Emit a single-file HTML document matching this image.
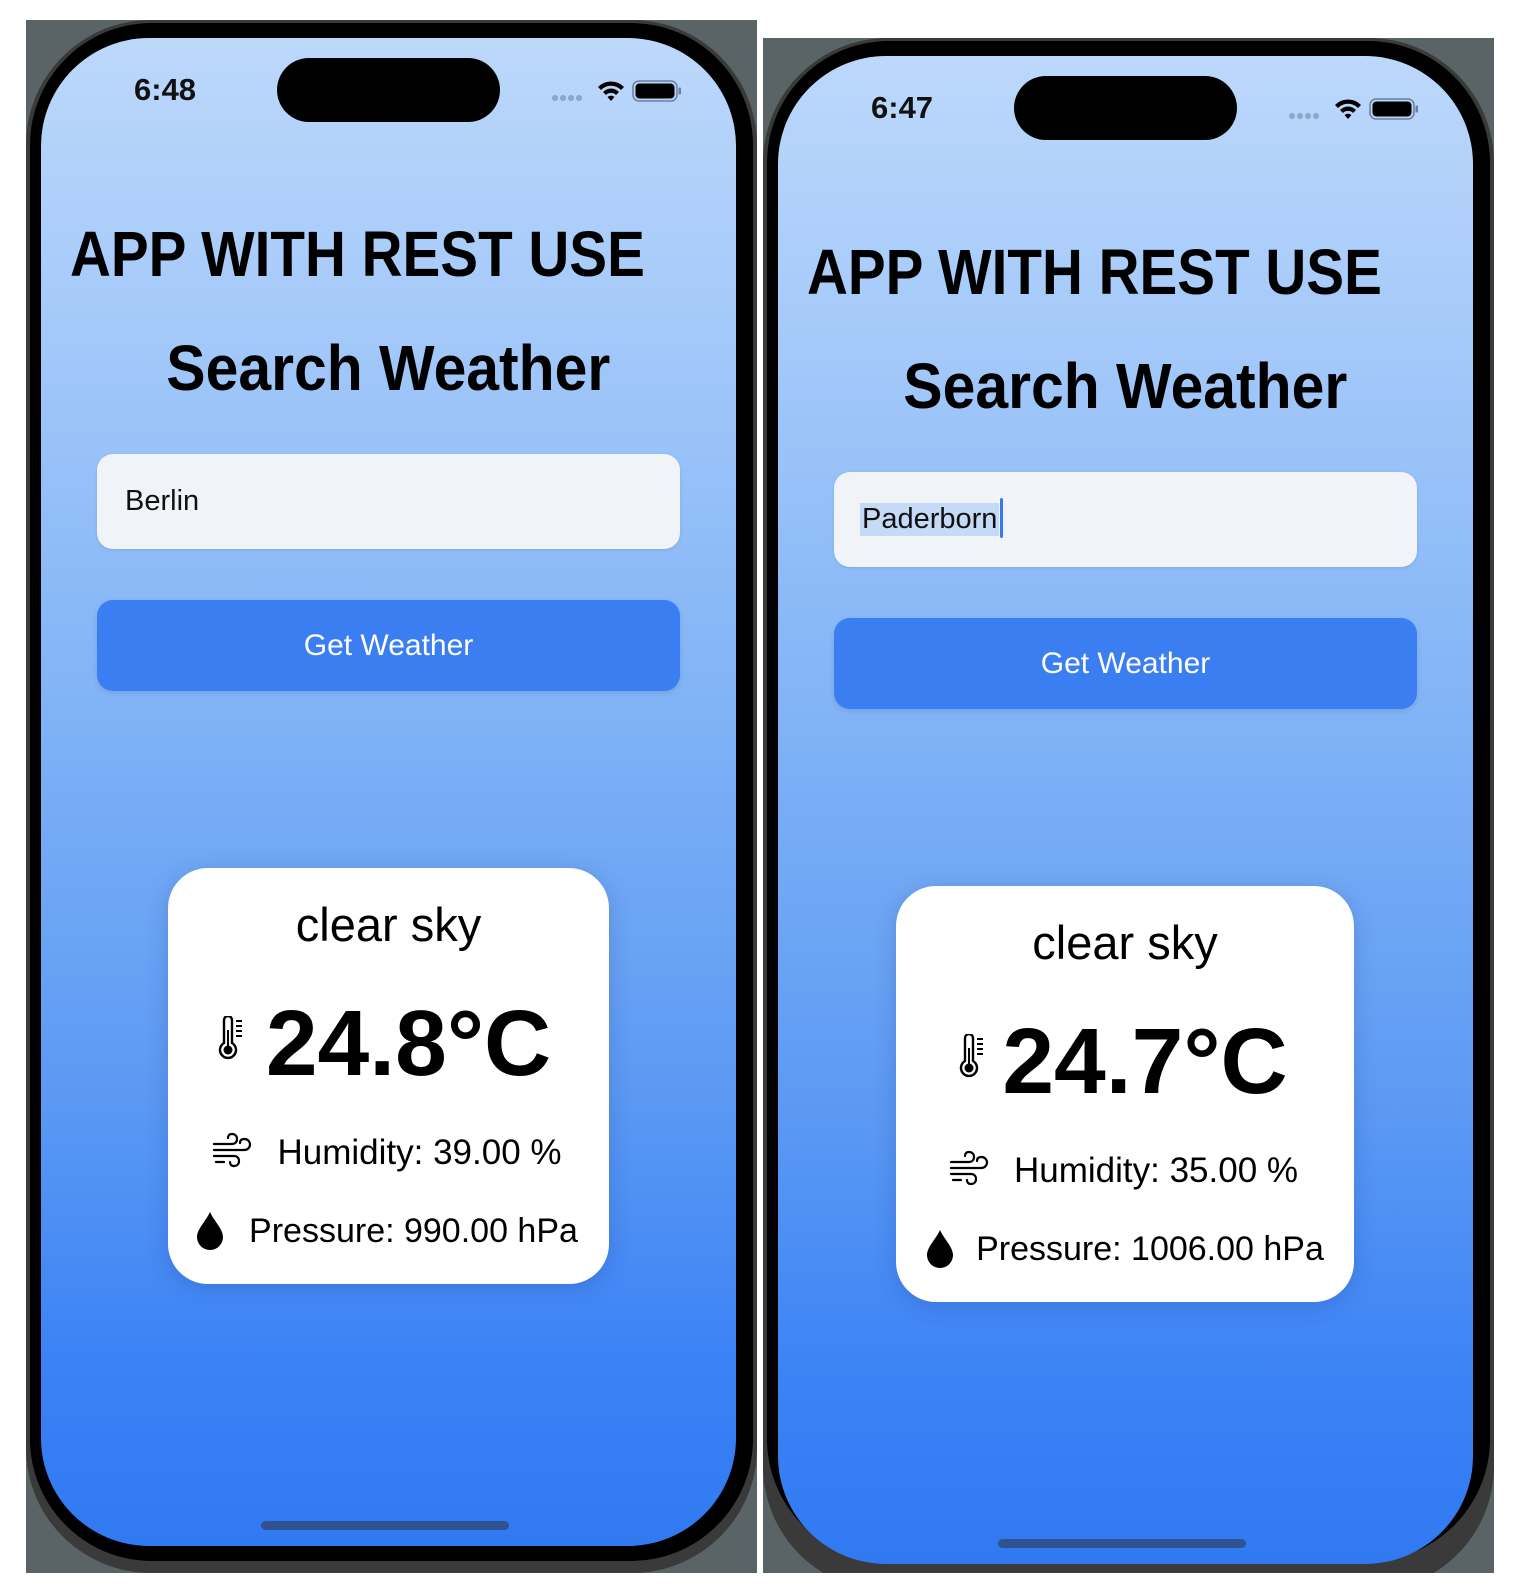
<!DOCTYPE html>
<html><head><meta charset="utf-8"><style>
*{margin:0;padding:0;box-sizing:border-box}
body{width:1522px;height:1594px;background:#fff;position:relative;overflow:hidden;font-family:"Liberation Sans",sans-serif}
.ph{position:absolute;width:731px;height:1553px;overflow:hidden;background:#5a6466}
.frame{position:absolute;left:0;top:0;width:731px;height:1553px;border-radius:125px;background:#3a3a3a}
.bez{position:absolute;left:4px;top:3px;right:4px;bottom:12px;border-radius:122px;background:#000}
.scr{position:absolute;left:15px;top:18px;width:695px;height:1508px;border-radius:108px;background:linear-gradient(#bcd8fb 0%,#a3c8f9 20%,#7fb2f6 45%,#5b99f3 70%,#3b82f6 88%,#3079f0 100%);overflow:hidden}
.a{position:absolute}
.time{left:93px;top:34px;font-size:31px;font-weight:bold;color:#111}
.isl{left:236px;top:20px;width:223px;height:64px;border-radius:32px;background:#000}
.title{left:0;width:695px;text-align:center;font-weight:bold;color:#000;white-space:nowrap}
.title span{display:inline-block}
.t1{left:29px;text-align:left;width:auto}
.t1 span{transform-origin:0 50%}
.inp{left:56px;top:416px;width:583px;height:95px;border-radius:16px;background:#f0f3f7;box-shadow:0 1px 3px rgba(0,0,0,.1)}
.inp span{position:absolute;left:28px;top:31px;font-size:29px;color:#111}
.btn{left:56px;top:562px;width:583px;height:91px;border-radius:16px;background:#3a7ef1;color:#fff;font-size:30px;text-align:center;line-height:91px;box-shadow:0 2px 6px rgba(0,0,0,.1)}
.card{top:830px;height:416px;border-radius:40px;background:#fff;box-shadow:0 4px 20px rgba(30,60,140,.25)}
.row{position:absolute;left:0;right:0;text-align:center;white-space:nowrap;color:#000}
.home{left:220px;top:1483px;width:248px;height:9px;border-radius:5px;background:#2f5390}
</style></head><body>

<!-- LEFT PHONE -->
<div class="ph" style="left:26px;top:20px">
<div class="frame"></div><div class="bez"></div>
<div class="scr">
  <div class="a time">6:48</div>
  <div class="a isl"></div>
  <svg class="a" style="left:510px;top:38px" width="140" height="30" viewBox="0 0 140 30">
    <g fill="#8aa6c8"><circle cx="4" cy="22" r="3"/><circle cx="12" cy="22" r="3"/><circle cx="20" cy="22" r="3"/><circle cx="28" cy="22" r="3"/></g>
    <path d="M47 11a18 18 0 0 1 26 0l-3 3a14 14 0 0 0-20 0z M52 16a11 11 0 0 1 16 0l-3 3a7 7 0 0 0-10 0z M56.5 21a5 5 0 0 1 7 0l-3.5 4z" fill="#000"/>
    <rect x="82" y="5" width="44" height="20" rx="6" fill="none" stroke="#6a7f9c" stroke-width="1.5"/>
    <rect x="84.5" y="7.5" width="39" height="15" rx="4" fill="#000"/>
    <rect x="127.5" y="11.5" width="2.5" height="7" rx="1" fill="#6a7f9c"/>
  </svg>
  <div class="a title t1" style="top:179px;font-size:64px"><span style="transform:scaleX(.885)">APP WITH REST USE</span></div>
  <div class="a title" style="top:293px;font-size:64px"><span style="transform:scaleX(.92)">Search Weather</span></div>
  <div class="a inp"><span>Berlin</span></div>
  <div class="a btn">Get Weather</div>
  <div class="a card" style="left:127px;width:441px">
    <div class="row" style="top:29px;font-size:47px">clear sky</div>
    <div class="row" style="top:122px;font-size:93px;font-weight:bold;padding-left:40px">24.8°C</div>
    <svg class="a" style="left:50px;top:148px" width="26" height="44" viewBox="0 0 26 44"><path d="M6 4a4 4 0 0 1 8 0v23a8 8 0 1 1-8 0z" fill="none" stroke="#000" stroke-width="2.4"/><circle cx="10" cy="34" r="4.5" fill="#000"/><rect x="9" y="14" width="2" height="18" fill="#000"/><g stroke="#000" stroke-width="2"><path d="M18 5h6M18 10h6M18 15h6M18 20h6"/></g></svg>
    <div class="row" style="top:265px;font-size:35px;padding-left:62px">Humidity: 39.00 %</div>
    <svg class="a" style="left:44px;top:264px" width="42" height="36" viewBox="0 0 42 36"><g fill="none" stroke="#000" stroke-width="2.2" stroke-linecap="round"><path d="M2 12h18c3 0 5-2 5-5s-2-5-5-5-4 2-4 4"/><path d="M2 18h30c4 0 6-3 6-5.5S36 7 32.5 7 28 9 28 11"/><path d="M2 24h20c3 0 5 2 5 5s-2 5-5 5-4-2-4-4"/><path d="M4 30h8"/></g></svg>
    <div class="row" style="top:344px;font-size:34px;padding-left:50px">Pressure: 990.00 hPa</div>
    <svg class="a" style="left:28px;top:343px" width="28" height="40" viewBox="0 0 28 40"><path d="M14 1C10 10 1 18 1 26a13 13 0 0 0 26 0C27 18 18 10 14 1z" fill="#000"/></svg>
  </div>
  <div class="a home"></div>
</div>
</div>

<!-- RIGHT PHONE -->
<div class="ph" style="left:763px;top:38px;height:1535px">
<div class="frame"></div><div class="bez"></div>
<div class="scr">
  <div class="a time">6:47</div>
  <div class="a isl"></div>
  <svg class="a" style="left:510px;top:38px" width="140" height="30" viewBox="0 0 140 30">
    <g fill="#8aa6c8"><circle cx="4" cy="22" r="3"/><circle cx="12" cy="22" r="3"/><circle cx="20" cy="22" r="3"/><circle cx="28" cy="22" r="3"/></g>
    <path d="M47 11a18 18 0 0 1 26 0l-3 3a14 14 0 0 0-20 0z M52 16a11 11 0 0 1 16 0l-3 3a7 7 0 0 0-10 0z M56.5 21a5 5 0 0 1 7 0l-3.5 4z" fill="#000"/>
    <rect x="82" y="5" width="44" height="20" rx="6" fill="none" stroke="#6a7f9c" stroke-width="1.5"/>
    <rect x="84.5" y="7.5" width="39" height="15" rx="4" fill="#000"/>
    <rect x="127.5" y="11.5" width="2.5" height="7" rx="1" fill="#6a7f9c"/>
  </svg>
  <div class="a title t1" style="top:179px;font-size:64px"><span style="transform:scaleX(.885)">APP WITH REST USE</span></div>
  <div class="a title" style="top:293px;font-size:64px"><span style="transform:scaleX(.92)">Search Weather</span></div>
  <div class="a inp"><span style="background:#c4daf6;padding:0 2px;left:26px">Paderborn</span><div class="a" style="left:166px;top:26px;width:3px;height:40px;background:#3478f6;border-radius:2px"></div></div>
  <div class="a btn">Get Weather</div>
  <div class="a card" style="left:118px;width:458px">
    <div class="row" style="top:29px;font-size:47px">clear sky</div>
    <div class="row" style="top:122px;font-size:93px;font-weight:bold;padding-left:40px">24.7°C</div>
    <svg class="a" style="left:63px;top:148px" width="26" height="44" viewBox="0 0 26 44"><path d="M6 4a4 4 0 0 1 8 0v23a8 8 0 1 1-8 0z" fill="none" stroke="#000" stroke-width="2.4"/><circle cx="10" cy="34" r="4.5" fill="#000"/><rect x="9" y="14" width="2" height="18" fill="#000"/><g stroke="#000" stroke-width="2"><path d="M18 5h6M18 10h6M18 15h6M18 20h6"/></g></svg>
    <div class="row" style="top:265px;font-size:35px;padding-left:62px">Humidity: 35.00 %</div>
    <svg class="a" style="left:53px;top:264px" width="42" height="36" viewBox="0 0 42 36"><g fill="none" stroke="#000" stroke-width="2.2" stroke-linecap="round"><path d="M2 12h18c3 0 5-2 5-5s-2-5-5-5-4 2-4 4"/><path d="M2 18h30c4 0 6-3 6-5.5S36 7 32.5 7 28 9 28 11"/><path d="M2 24h20c3 0 5 2 5 5s-2 5-5 5-4-2-4-4"/><path d="M4 30h8"/></g></svg>
    <div class="row" style="top:344px;font-size:34px;padding-left:50px">Pressure: 1006.00 hPa</div>
    <svg class="a" style="left:30px;top:343px" width="28" height="40" viewBox="0 0 28 40"><path d="M14 1C10 10 1 18 1 26a13 13 0 0 0 26 0C27 18 18 10 14 1z" fill="#000"/></svg>
  </div>
  <div class="a home" style="top:1483px"></div>
</div>
</div>
</body></html>
